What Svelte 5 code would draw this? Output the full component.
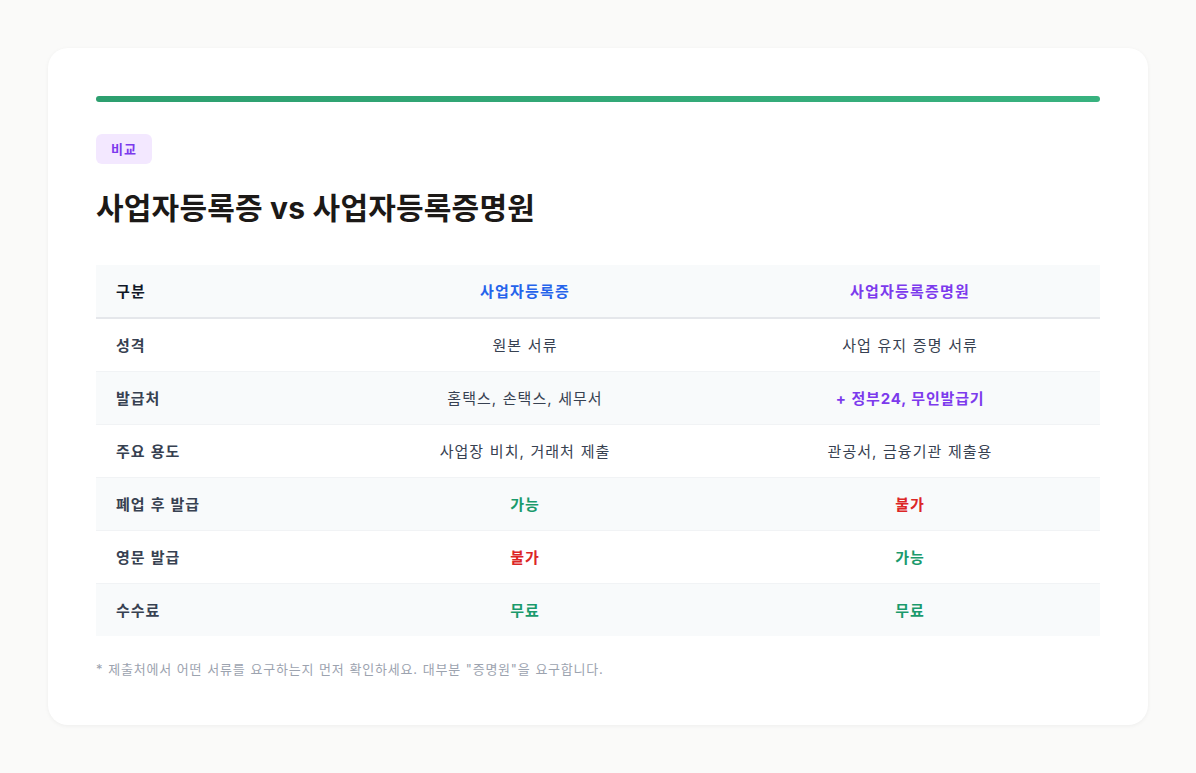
<script>
  const rows = [
    { label: "성격", a: "원본 서류", b: "사업 유지 증명 서류" },
    { label: "발급처", a: "홈택스, 손택스, 세무서", b: "+ 정부24, 무인발급기", bClass: "purple" },
    { label: "주요 용도", a: "사업장 비치, 거래처 제출", b: "관공서, 금융기관 제출용" },
    { label: "폐업 후 발급", a: "가능", aClass: "yes", b: "불가", bClass: "no" },
    { label: "영문 발급", a: "불가", aClass: "no", b: "가능", bClass: "yes" },
    { label: "수수료", a: "무료", aClass: "yes", b: "무료", bClass: "yes" },
  ];
</script>

<main>
  <section class="card">
    <div class="bar"></div>
    <span class="badge">비교</span>
    <h1>사업자등록증 vs 사업자등록증명원</h1>

    <table>
      <colgroup>
        <col class="col-label" />
        <col class="col-a" />
        <col />
      </colgroup>
      <thead>
        <tr>
          <th class="first">구분</th>
          <th class="blue">사업자등록증</th>
          <th class="purple">사업자등록증명원</th>
        </tr>
      </thead>
      <tbody>
        {#each rows as row}
          <tr>
            <td class="first">{row.label}</td>
            <td class={row.aClass}>{row.a}</td>
            <td class={row.bClass}>{row.b}</td>
          </tr>
        {/each}
      </tbody>
    </table>

    <p class="note">* 제출처에서 어떤 서류를 요구하는지 먼저 확인하세요. 대부분 "증명원"을 요구합니다.</p>
  </section>
</main>

<style>
  :global(body) {
    background: #fafaf9;
    font-family: Inter, "Noto Sans CJK KR", sans-serif;
  }

  main {
    padding: 48px;
  }

  .card {
    background: #fff;
    border-radius: 20px;
    box-shadow: 0 1px 4px rgba(0, 0, 0, 0.05);
    padding: 48px;
    height: 677px;
    box-sizing: border-box;
  }

  .bar {
    height: 6px;
    border-radius: 3px;
    background: linear-gradient(90deg, #2d9f6f, #38b27f);
    margin-bottom: 32px;
  }

  .badge {
    display: inline-block;
    background: #f3e8ff;
    color: #7c3aed;
    font-size: 13px;
    letter-spacing: 1px;
    font-weight: 700;
    line-height: 30px;
    padding: 0 15px;
    border-radius: 6px;
  }

  h1 {
    margin: 22px 0 35px;
    font-size: 30px;
    letter-spacing: 0.2px;
    line-height: 44px;
    font-weight: 700;
    color: #1c1917;
  }

  table {
    width: 100%;
    border-collapse: collapse;
    font-size: 15px;
    letter-spacing: 1px;
    word-spacing: 0.5px;
    table-layout: fixed;
  }

  .col-label { width: 234px; }
  .col-a { width: 390px; }

  th, td {
    height: 53px;
    padding: 0 20px;
    text-align: center;
    color: #374151;
    box-sizing: border-box;
  }

  th {
    background: #f8fafb;
    border-bottom: 2px solid #e5e7eb;
    font-weight: 700;
    padding-bottom: 2px;
    letter-spacing: 1.2px;
  }

  td {
    border-bottom: 1px solid #f1f3f5;
  }

  td.purple {
    letter-spacing: 0.8px;
  }

  tbody tr:nth-child(even) td {
    background: #f8fafb;
  }

  tbody tr:last-child td {
    border-bottom: none;
  }

  th.first {
    color: #111827;
  }

  .first {
    text-align: left;
    font-weight: 700;
  }

  .blue { color: #2563eb; }
  .purple { color: #7c3aed; font-weight: 700; }
  .yes { color: #1a9a6c; font-weight: 700; }
  .no { color: #dc2626; font-weight: 700; }

  .note {
    margin: 23px 0 0;
    font-size: 13px;
    letter-spacing: 0.78px;
    word-spacing: 0.5px;
    color: #9ca3af;
  }
</style>
